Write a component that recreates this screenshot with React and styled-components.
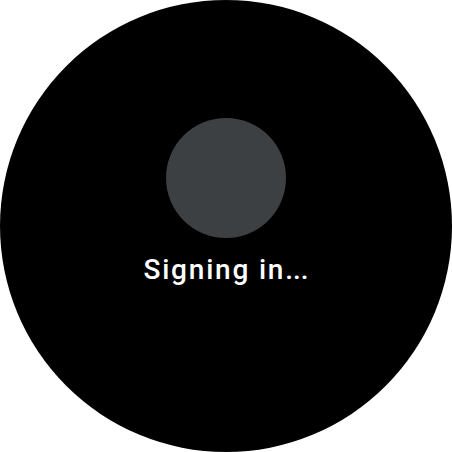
import React from "react";
import styled, { createGlobalStyle } from "styled-components";

const Global = createGlobalStyle`
  html, body { margin: 0; padding: 0; background: #ffffff; }
  body { font-family: Roboto, "Noto Sans", sans-serif; }
`;

const Screen = styled.div`
  width: 452px;
  height: 452px;
  background: #ffffff;
`;

const Watch = styled.div`
  width: 452px;
  height: 452px;
  border-radius: 50%;
  background: #000000;
  display: flex;
  flex-direction: column;
  align-items: center;
  padding-top: 118px;
  box-sizing: border-box;
`;

const Avatar = styled.div`
  width: 120px;
  height: 120px;
  border-radius: 50%;
  background: #3c4043;
`;

const Label = styled.div`
  margin-top: 16px;
  color: #ffffff;
  font-family: Roboto, sans-serif;
  font-weight: 500;
  font-size: 28px;
  line-height: 32px;
  letter-spacing: 1.8px;
  white-space: nowrap;
`;

const Dots = styled.span`
  letter-spacing: 0;
`;

export default function App() {
  return (
    <Screen>
      <Global />
      <Watch>
        <Avatar />
        <Label>
          Signing in<Dots>...</Dots>
        </Label>
      </Watch>
    </Screen>
  );
}
